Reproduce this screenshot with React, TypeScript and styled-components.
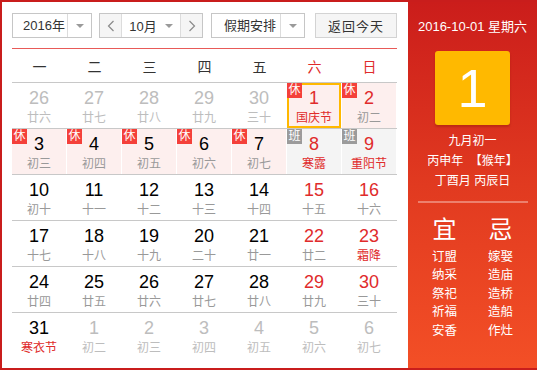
import React from "react";
import styled, { createGlobalStyle } from "styled-components";

const Global = createGlobalStyle`
  html, body { margin: 0; padding: 0; background: #fff; }
  body { font-family: "Liberation Sans", "Noto Sans CJK SC", sans-serif; }
  * { box-sizing: border-box; }
`;

const RED = "#e02b2b";
const FRAME = "#c91d1c";

const Frame = styled.div`
  width: 537px;
  height: 370px;
  display: flex;
  border: 2px solid ${FRAME};
  border-right: none;
  background: #fff;
`;

const Main = styled.div`
  width: 406px;
  padding: 0 11px 0 10px;
  display: flex;
  flex-direction: column;
`;

const Toolbar = styled.div`
  display: flex;
  align-items: center;
  padding: 11px 0 10px;
  border-bottom: 1px solid #e85a58;
`;

const SelectBox = styled.div<{ $w: number; $ml?: number }>`
  width: ${(p) => p.$w}px;
  height: 25px;
  margin-left: ${(p) => p.$ml ?? 0}px;
  border: 1px solid #c6c6c6;
  display: flex;
  background: #fff;
  font-size: 13px;
  color: #333;
`;

const SelectText = styled.div<{ $pl?: number }>`
  flex: 1;
  display: flex;
  align-items: center;
  padding-left: ${(p) => p.$pl ?? 10}px;
  line-height: 23px;
`;

const ArrowCell = styled.div`
  width: 24px;
  border-left: 1px solid #dcdcdc;
  display: flex;
  align-items: center;
  justify-content: center;
`;

const Caret = styled.span`
  width: 0;
  height: 0;
  border-left: 4px solid transparent;
  border-right: 4px solid transparent;
  border-top: 4px solid #9a9a9a;
  margin-left: 8px;
`;

const CaretOnly = styled(Caret)`
  margin-left: 0;
`;

const NavBtn = styled.div<{ $side: "l" | "r" }>`
  width: 22px;
  background: #f5f5f5;
  display: flex;
  align-items: center;
  justify-content: center;
  ${(p) => (p.$side === "l" ? "border-right: 1px solid #dcdcdc;" : "border-left: 1px solid #dcdcdc;")}
`;

const MonthMid = styled.div`
  flex: 1;
  display: flex;
  align-items: center;
  justify-content: center;
`;

const TodayBtn = styled.div`
  margin-left: auto;
  width: 82px;
  height: 25px;
  border: 1px solid #d3d3d3;
  background: #f5f5f5;
  font-size: 13px;
  color: #333;
  display: flex;
  align-items: center;
  justify-content: center;
  letter-spacing: 1px;
`;

const WeekHead = styled.div`
  display: grid;
  grid-template-columns: repeat(7, 55px);
  height: 34px;
  border-bottom: 1px solid #c8c8c8;
`;

const WeekDay = styled.div<{ $red?: boolean }>`
  display: flex;
  align-items: center;
  justify-content: center;
  font-size: 14px;
  color: ${(p) => (p.$red ? RED : "#333")};
  padding-top: 1px;
`;

const Row = styled.div<{ $last?: boolean }>`
  display: grid;
  grid-template-columns: repeat(7, 55px);
  height: 46px;
  border-bottom: ${(p) => (p.$last ? "none" : "1px solid #c8c8c8")};
`;

type Kind = "none" | "rest" | "work";

const Cell = styled.div<{ $kind: Kind; $sel?: boolean }>`
  position: relative;
  border-right: 1px solid #fff;
  background: ${(p) => (p.$kind === "rest" ? "#fdefee" : p.$kind === "work" ? "#f4f4f4" : "#fff")};
  box-shadow: ${(p) => (p.$sel ? "inset 0 0 0 2px #ffb800" : "none")};
  display: flex;
  flex-direction: column;
  align-items: center;
  padding-top: 5px;
`;

const Num = styled.div<{ $c: string }>`
  font-size: 18px;
  line-height: 20px;
  color: ${(p) => p.$c};
`;

const Lunar = styled.div<{ $c: string }>`
  font-size: 12px;
  line-height: 16px;
  margin-top: 2px;
  color: ${(p) => p.$c};
`;

const Badge = styled.span<{ $work?: boolean }>`
  position: absolute;
  left: 0;
  top: 0;
  width: 15px;
  height: 15px;
  background: ${(p) => (p.$work ? "#9b9b9b" : "#f4403a")};
  color: #fff;
  font-size: 12px;
  line-height: 15px;
  text-align: center;
`;

const Panel = styled.div`
  width: 129px;
  height: 366px;
  background: linear-gradient(to bottom, #cb1d1b 0%, #e13a20 50%, #f34f26 100%);
  display: flex;
  flex-direction: column;
  align-items: center;
  color: #fff;
`;

const DateLine = styled.div`
  font-size: 13px;
  line-height: 18px;
  margin-top: 16px;
  white-space: nowrap;
`;

const BigDay = styled.div`
  width: 75px;
  height: 74px;
  margin-top: 15px;
  border-radius: 3px;
  background: #ffb900;
  box-shadow: 0 2px 2px rgba(120, 20, 0, 0.3);
  display: flex;
  align-items: center;
  justify-content: center;
  font-size: 54px;
  line-height: 1;
  color: #fff;
`;

const LunarInfo = styled.div`
  margin-top: 6px;
  font-size: 12px;
  line-height: 20px;
  text-align: center;
  white-space: pre;
`;

const Divider = styled.div`
  width: 110px;
  height: 2px;
  margin-top: 10px;
  background: rgba(255, 255, 255, 0.35);
`;

const YiJi = styled.div`
  display: flex;
  gap: 6px;
  margin-top: 13px;
`;

const YiCol = styled.div`
  width: 50px;
  display: flex;
  flex-direction: column;
  align-items: center;
`;

const YiTitle = styled.div`
  font-size: 24px;
  line-height: 28px;
  margin-bottom: 4px;
`;

const YiItem = styled.div`
  font-size: 12.5px;
  line-height: 18.4px;
`;

type Day = {
  n: number;
  l: string;
  other?: boolean;
  weekend?: boolean;
  fest?: boolean;
  kind?: Kind;
  sel?: boolean;
};

const rows: Day[][] = [
  [
    { n: 26, l: "廿六", other: true },
    { n: 27, l: "廿七", other: true },
    { n: 28, l: "廿八", other: true },
    { n: 29, l: "廿九", other: true },
    { n: 30, l: "三十", other: true },
    { n: 1, l: "国庆节", weekend: true, fest: true, kind: "rest", sel: true },
    { n: 2, l: "初二", weekend: true, kind: "rest" },
  ],
  [
    { n: 3, l: "初三", kind: "rest" },
    { n: 4, l: "初四", kind: "rest" },
    { n: 5, l: "初五", kind: "rest" },
    { n: 6, l: "初六", kind: "rest" },
    { n: 7, l: "初七", kind: "rest" },
    { n: 8, l: "寒露", weekend: true, fest: true, kind: "work" },
    { n: 9, l: "重阳节", weekend: true, fest: true, kind: "work" },
  ],
  [
    { n: 10, l: "初十" },
    { n: 11, l: "十一" },
    { n: 12, l: "十二" },
    { n: 13, l: "十三" },
    { n: 14, l: "十四" },
    { n: 15, l: "十五", weekend: true },
    { n: 16, l: "十六", weekend: true },
  ],
  [
    { n: 17, l: "十七" },
    { n: 18, l: "十八" },
    { n: 19, l: "十九" },
    { n: 20, l: "二十" },
    { n: 21, l: "廿一" },
    { n: 22, l: "廿二", weekend: true },
    { n: 23, l: "霜降", weekend: true, fest: true },
  ],
  [
    { n: 24, l: "廿四" },
    { n: 25, l: "廿五" },
    { n: 26, l: "廿六" },
    { n: 27, l: "廿七" },
    { n: 28, l: "廿八" },
    { n: 29, l: "廿九", weekend: true },
    { n: 30, l: "三十", weekend: true },
  ],
  [
    { n: 31, l: "寒衣节", fest: true },
    { n: 1, l: "初二", other: true },
    { n: 2, l: "初三", other: true },
    { n: 3, l: "初四", other: true },
    { n: 4, l: "初五", other: true },
    { n: 5, l: "初六", other: true },
    { n: 6, l: "初七", other: true },
  ],
];

const weekdays = ["一", "二", "三", "四", "五", "六", "日"];
const yi = ["订盟", "纳采", "祭祀", "祈福", "安香"];
const ji = ["嫁娶", "造庙", "造桥", "造船", "作灶"];

const Chevron = ({ dir }: { dir: "l" | "r" }) => (
  <svg width="8" height="12" viewBox="0 0 8 12">
    <path
      d={dir === "l" ? "M6.5 1 L1.5 6 L6.5 11" : "M1.5 1 L6.5 6 L1.5 11"}
      fill="none"
      stroke="#8a8a8a"
      strokeWidth="1.2"
    />
  </svg>
);

export default function App() {
  return (
    <>
      <Global />
      <Frame>
        <Main>
          <Toolbar>
            <SelectBox $w={80}>
              <SelectText>2016年</SelectText>
              <ArrowCell>
                <CaretOnly />
              </ArrowCell>
            </SelectBox>
            <SelectBox $w={104} $ml={7}>
              <NavBtn $side="l">
                <Chevron dir="l" />
              </NavBtn>
              <MonthMid>
                10月
                <Caret />
              </MonthMid>
              <NavBtn $side="r">
                <Chevron dir="r" />
              </NavBtn>
            </SelectBox>
            <SelectBox $w={94} $ml={8}>
              <SelectText $pl={12}>假期安排</SelectText>
              <ArrowCell>
                <CaretOnly />
              </ArrowCell>
            </SelectBox>
            <TodayBtn>返回今天</TodayBtn>
          </Toolbar>
          <WeekHead>
            {weekdays.map((w, i) => (
              <WeekDay key={w} $red={i >= 5}>
                {w}
              </WeekDay>
            ))}
          </WeekHead>
          {rows.map((r, ri) => (
            <Row key={ri} $last={ri === rows.length - 1}>
              {r.map((d, di) => {
                const numColor = d.other ? "#bdbdbd" : d.weekend ? RED : "#000";
                const lunarColor = d.other ? "#bdbdbd" : d.fest ? RED : "#999";
                const kind = d.kind ?? "none";
                return (
                  <Cell key={di} $kind={kind} $sel={d.sel}>
                    {kind !== "none" && <Badge $work={kind === "work"}>{kind === "work" ? "班" : "休"}</Badge>}
                    <Num $c={numColor}>{d.n}</Num>
                    <Lunar $c={lunarColor}>{d.l}</Lunar>
                  </Cell>
                );
              })}
            </Row>
          ))}
        </Main>
        <Panel>
          <DateLine>2016-10-01 星期六</DateLine>
          <BigDay>1</BigDay>
          <LunarInfo>{"九月初一\n丙申年  【猴年】\n丁酉月 丙辰日"}</LunarInfo>
          <Divider />
          <YiJi>
            <YiCol>
              <YiTitle>宜</YiTitle>
              {yi.map((t) => (
                <YiItem key={t}>{t}</YiItem>
              ))}
            </YiCol>
            <YiCol>
              <YiTitle>忌</YiTitle>
              {ji.map((t) => (
                <YiItem key={t}>{t}</YiItem>
              ))}
            </YiCol>
          </YiJi>
        </Panel>
      </Frame>
    </>
  );
}
